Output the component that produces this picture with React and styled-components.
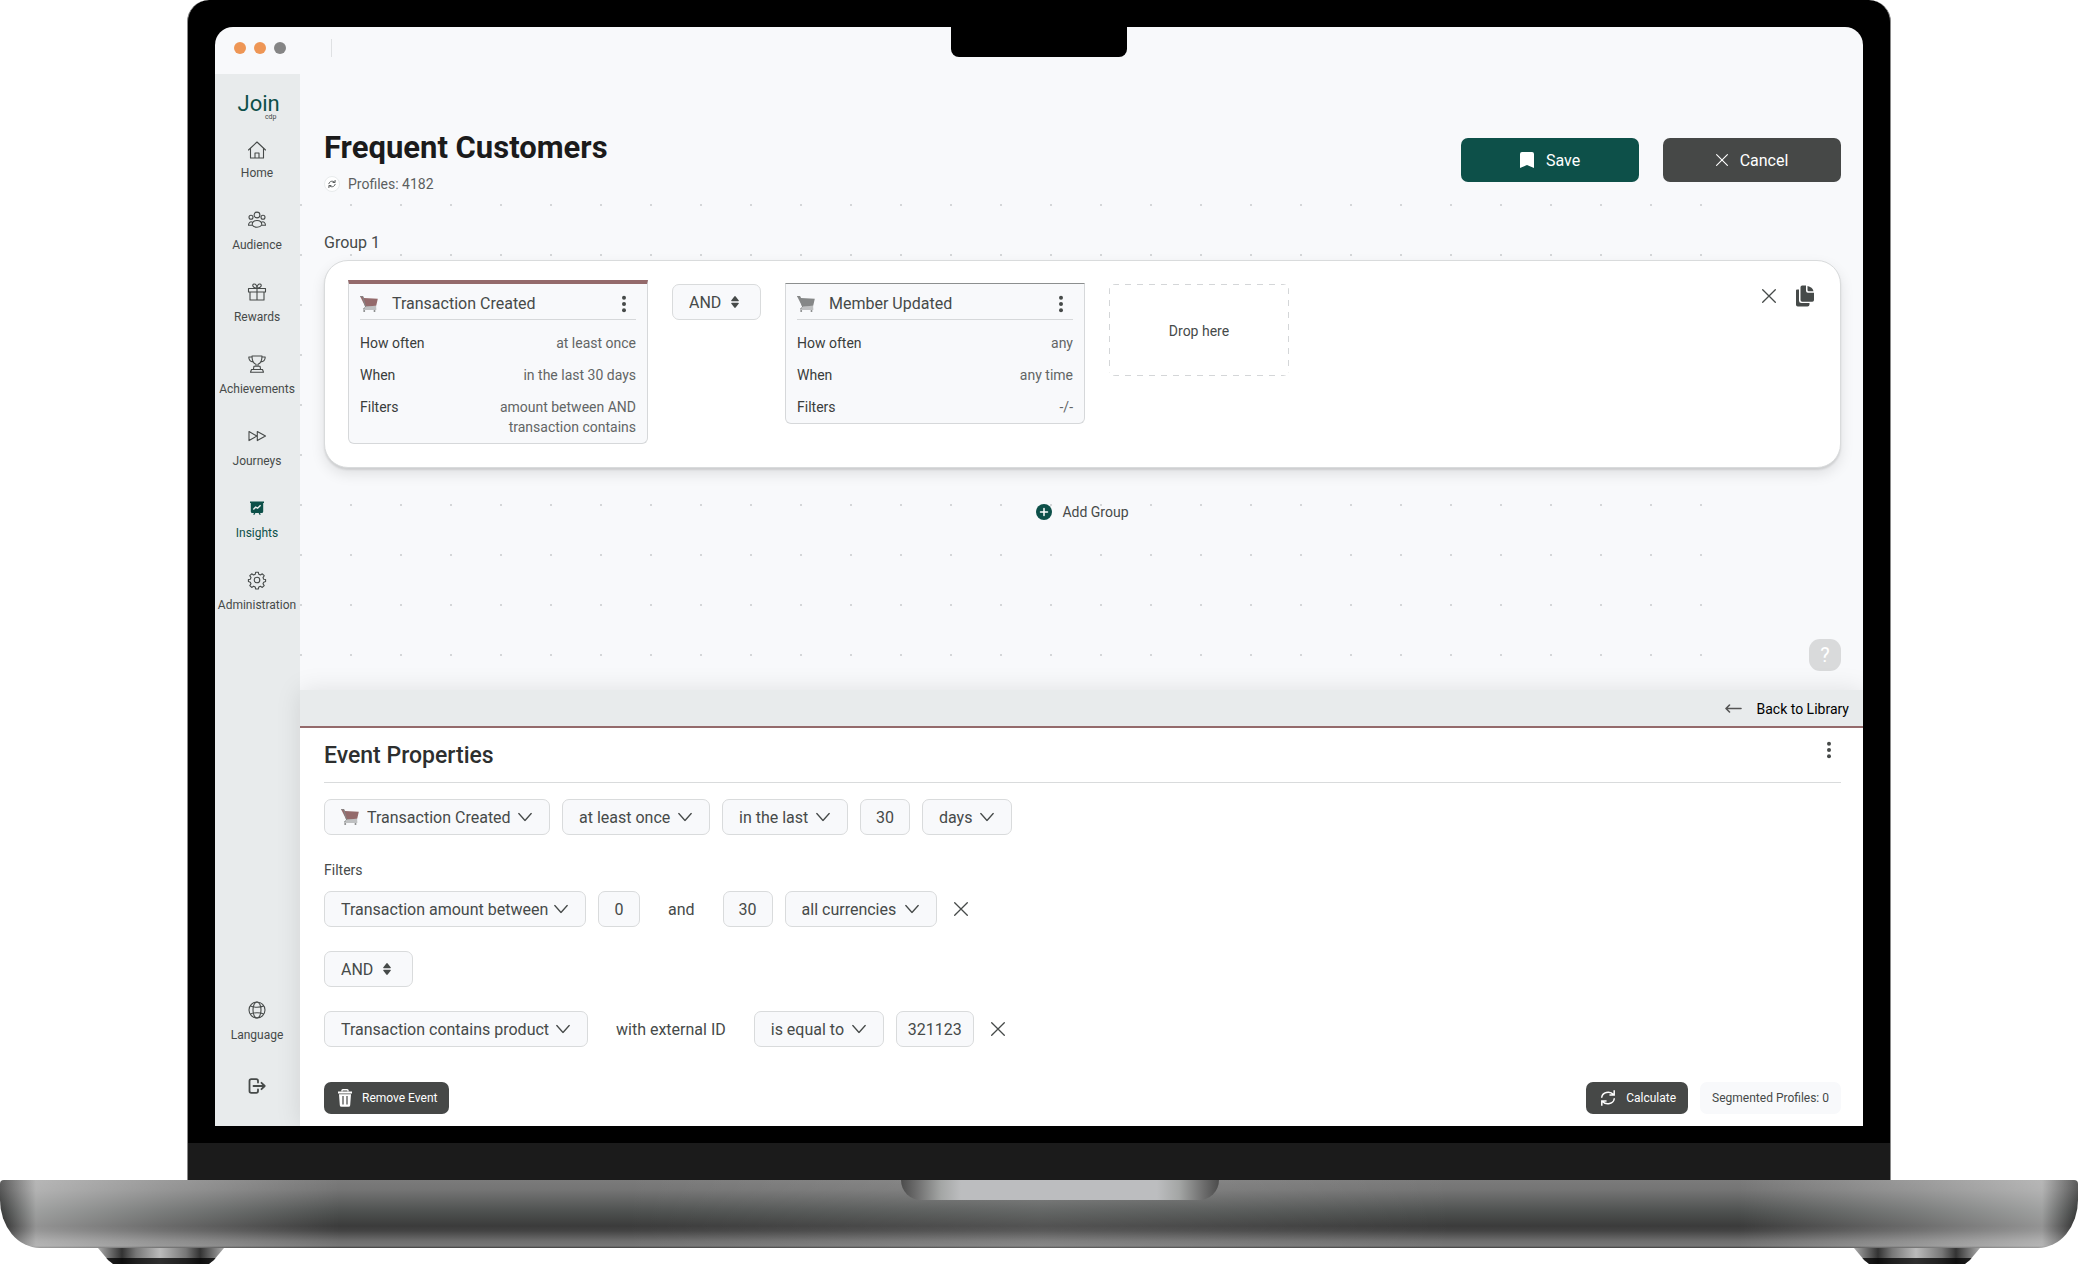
import styled, { createGlobalStyle } from 'styled-components';

const GlobalStyle = createGlobalStyle`
  *, *::before, *::after {
    box-sizing: border-box;
  }

  body {
    margin: 0;
    background: #fff;
    color: #464a49;
    font-family: Roboto, "Liberation Sans", sans-serif;
    font-size: 16px;
  }

  button, input, select {
    font-family: inherit;
    color: inherit;
  }

  h1, h2, h3, p, dl, dd {
    margin: 0;
  }
`;

/* Laptop frame */

const Laptop = styled.div`
  display: flex;
  flex-direction: column;
  min-height: 100vh;
`;

const Lid = styled.div`
  position: relative;
  flex: 1;
  display: flex;
  flex-direction: column;
  margin: 0 187px;
  padding: 27px 27px 0;
  background: #000;
  border: solid #8a8a8a;
  border-width: 0 1px;
  border-radius: 22px 22px 0 0;
`;

const Camera = styled.div`
  position: absolute;
  top: 0;
  left: 50%;
  width: 176px;
  height: 57px;
  margin-left: -88px;
  background: #000;
  border-radius: 0 0 8px 8px;
`;

const Screen = styled.div`
  flex: 1;
  display: flex;
  flex-direction: column;
  overflow: hidden;
  background: #f8f9fb;
  border-radius: 18px 18px 0 0;
`;

const Chin = styled.div`
  height: 54px;
  margin: 0 -27px;
  background: #1b1b1b;
  border-top: 17px solid #000;
`;

const Base = styled.div`
  display: flex;
  justify-content: center;
  height: 68px;
  padding-left: 42px;
  border-radius: 4px 4px 40px 40px / 4px 4px 48px 48px;
  background:
    linear-gradient(
      90deg,
      rgba(0, 0, 0, 0.25),
      rgba(255, 255, 255, 0.45) 36px,
      rgba(255, 255, 255, 0.25) 160px,
      rgba(255, 255, 255, 0) 340px,
      rgba(255, 255, 255, 0) 30%,
      rgba(255, 255, 255, 0.12) 50%,
      rgba(255, 255, 255, 0) 70%,
      rgba(255, 255, 255, 0) calc(100% - 340px),
      rgba(255, 255, 255, 0.25) calc(100% - 160px),
      rgba(255, 255, 255, 0.45) calc(100% - 36px),
      rgba(0, 0, 0, 0.25)
    ),
    linear-gradient(#7b7b7b, #747474 10px, #4d504f 32px, #3b3b3b 46px, #444 51px, #6e6e6e 61px, #777 66px, #3c3c3c 68px);
`;

const Lip = styled.div`
  width: 318px;
  height: 20px;
  border-radius: 0 0 20px 20px;
  background: linear-gradient(90deg, #4c4c4c, #6e6e6e 16px, #a4a6a5 40px, #bcbdbf 60px, #bcbdbf 256px, #a4a6a5 278px, #6e6e6e 302px, #4c4c4c);
`;

const Feet = styled.div`
  display: flex;
  justify-content: space-between;
  padding: 0 98px;
`;

const Foot = styled.div`
  width: 126px;
  height: 16px;
  clip-path: polygon(0 0, 100% 0, 92% 75%, 88% 100%, 12% 100%, 8% 75%);
  background:
    linear-gradient(transparent 10px, rgba(0, 0, 0, 0.75) 10px),
    linear-gradient(90deg, #aaa, #333 24px, #777 38px, #bbb 62px, #777 88px, #333 102px, #aaa);
`;

/* Window */

const TitleBar = styled.div`
  display: flex;
  align-items: center;
  gap: 8px;
  height: 47px;
  padding: 0 19px 5px;
`;

const WindowDot = styled.span`
  width: 12px;
  height: 12px;
  border-radius: 50%;
  background: ${props => props.$color};
`;

const TitleDivider = styled.span`
  width: 1px;
  height: 18px;
  margin-left: 37px;
  background: #dfe1e3;
`;

const Workspace = styled.div`
  flex: 1;
  display: flex;
`;

/* Sidebar */

const Sidebar = styled.aside`
  display: flex;
  flex-direction: column;
  justify-content: space-between;
  flex: 0 0 85px;
  padding: 16px 1px 28px 0;
  background: #e8ebec;
`;

const Logo = styled.a`
  display: block;
  width: 39px;
  margin: 0 auto 14px;
  color: #0d5049;
  font-size: 22px;
  line-height: 28px;
  text-decoration: none;

  small {
    display: block;
    margin-top: -6px;
    color: #464a49;
    font-size: 7px;
    line-height: 10px;
    text-align: right;
  }
`;

const NavList = styled.nav`
  display: flex;
  flex-direction: column;
  align-items: center;
  gap: ${props => props.$gap}px;
`;

const NavItem = styled.a`
  display: flex;
  flex-direction: column;
  align-items: center;
  gap: 5px;
  color: ${props => (props.$active ? '#0d5049' : '#464a49')};
  font-size: 12px;
  line-height: 16px;
  text-decoration: none;
`;

/* Segment canvas */

const Main = styled.main`
  position: relative;
  flex: 1;
  min-width: 0;
  display: flex;
  flex-direction: column;
`;

const PageHeader = styled.header`
  display: flex;
  align-items: center;
  justify-content: space-between;
  padding: 54px 22px 12px 24px;
`;

const PageTitle = styled.h1`
  margin-bottom: 8px;
  color: #1b1b1b;
  font-size: 31px;
  font-weight: 700;
  line-height: 40px;
`;

const ProfileCount = styled.p`
  display: flex;
  align-items: center;
  gap: 8px;
  color: #5c5f5f;
  font-size: 14px;
  line-height: 16px;
`;

const RefreshButton = styled.button`
  display: flex;
  align-items: center;
  justify-content: center;
  width: 16px;
  height: 16px;
  padding: 0;
  background: #fff;
  border: 1px solid #e8ebec;
  border-radius: 50%;
`;

const Actions = styled.div`
  display: flex;
  gap: ${props => props.$gap}px;
`;

const LargeButton = styled.button`
  display: flex;
  align-items: center;
  justify-content: center;
  gap: 12px;
  width: 178px;
  height: 44px;
  background: ${props => (props.$primary ? '#0d5049' : '#464847')};
  border: none;
  border-radius: 7px;
  color: #fff;
  font-size: 16px;
  cursor: pointer;
`;

const Canvas = styled.section`
  position: relative;
  flex: 1;
  display: flex;
  flex-direction: column;
  padding: 29px 22px 19px 24px;

  &::before {
    content: "";
    position: absolute;
    inset: 0 161px 0 0;
    background: conic-gradient(from 270deg at 2px 2px, #d4d6d8 90deg, transparent 0) 0 0 / 50px 50px;
  }

  > * {
    position: relative;
  }
`;

const GroupLabel = styled.h3`
  margin-bottom: 7px;
  font-size: 16px;
  font-weight: 400;
  line-height: 20px;
`;

const GroupCard = styled.div`
  display: flex;
  align-items: flex-start;
  gap: 24px;
  padding: 23px;
  background: #fff;
  border: 1px solid #d9dbdc;
  border-radius: 24px;
  box-shadow: 0 2px 2px rgba(0, 0, 0, 0.1), 0 6px 14px rgba(0, 0, 0, 0.1);
`;

const EventCard = styled.article`
  width: 300px;
  margin-top: ${props => (props.$selected ? -4 : -1)}px;
  padding: 0 11px 6px;
  background: #f8f9fb;
  border: 1px solid #d6d8da;
  border-top: ${props => (props.$selected ? '4px solid #946a6b' : '1px solid #8c8f8f')};
  border-radius: 0 0 6px 6px;
`;

const EventCardHeader = styled.header`
  display: flex;
  align-items: center;
  height: 36px;
  margin-bottom: 13px;
  padding-top: 5px;
  border-bottom: 1px solid #d6d8da;

  h3 {
    flex: 1;
    margin-left: 14px;
    font-size: 16px;
    font-weight: 400;
    line-height: 20px;
  }
`;

const IconButton = styled.button`
  display: flex;
  align-items: center;
  justify-content: center;
  width: 24px;
  height: 24px;
  padding: 0;
  background: none;
  border: none;
  cursor: pointer;
`;

const Conditions = styled.dl`
  display: flex;
  flex-direction: column;
  gap: 12px;
  font-size: 14px;
  line-height: 20px;
`;

const Condition = styled.div`
  display: flex;
  justify-content: space-between;

  dt {
    color: #3a3d3c;
  }

  dd {
    color: #626565;
    text-align: right;
    white-space: pre-line;
  }
`;

const DropZone = styled.div`
  display: flex;
  align-items: center;
  justify-content: center;
  width: 180px;
  height: 92px;
  padding-top: 2px;
  border-radius: 6px;
  background:
    repeating-linear-gradient(90deg, #d4d6d8 0 6px, transparent 6px 12px) 4px 0 / 100% 1px no-repeat,
    repeating-linear-gradient(90deg, #d4d6d8 0 6px, transparent 6px 12px) 4px 100% / 100% 1px no-repeat,
    repeating-linear-gradient(#d4d6d8 0 6px, transparent 6px 12px) 0 4px / 1px 100% no-repeat,
    repeating-linear-gradient(#d4d6d8 0 6px, transparent 6px 12px) 100% 4px / 1px 100% no-repeat;
  font-size: 14px;
`;

const GroupActions = styled.div`
  display: flex;
  gap: 12px;
  margin-left: auto;
`;

const AddGroupButton = styled.button`
  display: flex;
  align-items: center;
  align-self: center;
  gap: 10px;
  margin-top: 34px;
  padding: 0;
  background: none;
  border: none;
  font-size: 14px;
  line-height: 20px;
  cursor: pointer;
`;

const HelpButton = styled.button`
  align-self: flex-end;
  width: 32px;
  height: 32px;
  margin-top: auto;
  padding: 0;
  background: #d9dadb;
  border: none;
  border-radius: 11px;
  color: #fff;
  font-size: 20px;
  cursor: pointer;
`;

/* Event panel */

const Panel = styled.section`
  position: relative;
  background: #fff;
  box-shadow: 0 0 24px rgba(0, 0, 0, 0.1);
`;

const PanelBar = styled.div`
  display: flex;
  justify-content: flex-end;
  height: 38px;
  padding: 1px 14px 0;
  background: #e8ebec;
  border-bottom: 2px solid #946a6b;
`;

const BackLink = styled.a`
  display: flex;
  align-items: center;
  gap: 14px;
  color: #000;
  font-size: 14px;
  text-decoration: none;
`;

const PanelBody = styled.div`
  padding: 12px 22px 12px 24px;
`;

const PanelHeader = styled.header`
  display: flex;
  justify-content: space-between;
  margin-bottom: 16px;
  padding-bottom: 10px;
  border-bottom: 1px solid #d9dbdc;

  h2 {
    color: #2d2f2f;
    font-size: 23px;
    font-weight: 500;
    line-height: 32px;
  }

  button {
    height: 20px;
  }
`;

const FilterTitle = styled.h3`
  margin: 26px 0 12px;
  font-size: 14px;
  font-weight: 400;
  line-height: 18px;
`;

const FieldRow = styled.div`
  display: flex;
  align-items: center;
  gap: 12px;
`;

const FilterList = styled.div`
  display: flex;
  flex-direction: column;
  gap: 24px;
`;

const SelectBox = styled.label`
  position: relative;
  display: flex;
  width: ${props => props.$width}px;

  > svg {
    position: absolute;
    top: 50%;
    right: 18px;
    transform: translateY(-50%);
    pointer-events: none;
  }

  > svg:first-child {
    right: auto;
    left: 17px;
  }
`;

const Select = styled.select`
  width: 100%;
  height: 36px;
  padding: 0 0 0 ${props => (props.$withIcon ? 42 : 16)}px;
  appearance: none;
  background: #f8f9fb;
  border: 1px solid #d9dbdc;
  border-radius: 7px;
  font-size: 16px;
`;

const ValueInput = styled.input`
  width: ${props => props.$width}px;
  height: 36px;
  padding: 0;
  background: #f8f9fb;
  border: 1px solid #d9dbdc;
  border-radius: 7px;
  font-size: 16px;
  text-align: center;
`;

const JoinText = styled.span`
  padding: 0 16px;
  font-size: 16px;
`;

const PanelFooter = styled.footer`
  display: flex;
  justify-content: space-between;
  margin-top: 35px;
`;

const SmallButton = styled.button`
  display: flex;
  align-items: center;
  gap: 10px;
  height: 32px;
  padding: 0 12px 0 14px;
  background: #464847;
  border: none;
  border-radius: 7px;
  color: #fff;
  font-size: 12px;
  cursor: pointer;
`;

const Badge = styled.span`
  display: flex;
  align-items: center;
  height: 32px;
  padding: 0 12px;
  background: #f8f9fb;
  border-radius: 7px;
  font-size: 12px;
`;

/* Icons */

const LineIcon = ({ size = 24, width = 1.1, children }) => (
  <svg width={size} height={size} viewBox="0 0 24 24" fill="none" stroke="currentColor" strokeWidth={width} strokeLinecap="round" strokeLinejoin="round" aria-hidden="true">
    {children}
  </svg>
);

const HomeIcon = () => (
  <LineIcon>
    <path d="M3.500 14 12 6l8.500 8M5.500 12.500V22h13v-9.500M10 22v-5h4v5" />
  </LineIcon>
);

const AudienceIcon = () => (
  <LineIcon>
    <circle cx="12" cy="7" r="2.900" />
    <circle cx="6" cy="9.300" r="2" />
    <circle cx="18" cy="9.300" r="2" />
    <path d="M7.200 17c0-2.800 2-4.500 4.800-4.500s4.800 1.700 4.800 4.500c-2 3-7.600 3-9.600 0ZM7.500 14.200c-2-1.200-4 .5-4 3.100h3.600M16.500 14.200c2-1.200 4 .5 4 3.100h-3.600" />
  </LineIcon>
);

const GiftIcon = () => (
  <LineIcon>
    <path d="M3.500 8.500h17V12h-17zM5 12h14v8H5zM12 8.500V20M12 8C7.500 8.500 6.800 4.200 9 4c2-.2 3 2 3 4ZM12 8c4.500.5 5.200-3.800 3-4-2-.2-3 2-3 4Z" />
  </LineIcon>
);

const TrophyIcon = () => (
  <LineIcon>
    <path d="M7 4h10c0 5-1.500 7.500-4 8.300v1.900h-2v-1.900C8.500 11.500 7 9 7 4ZM7 5H3.800c0 3.300 1.700 5 4.400 5M17 5h3.200c0 3.300-1.700 5-4.400 5M9 14.200h6l.6 3.300H8.400zM6.500 17.500h11l1 2.700h-13z" />
  </LineIcon>
);

const JourneysIcon = () => (
  <LineIcon>
    <path d="M4 7.600v9l7.800-4.500zM12.300 7.600v9l8.200-4.500z" />
  </LineIcon>
);

const InsightsIcon = () => (
  <svg width="24" height="24" viewBox="0 0 24 24" fill="currentColor" aria-hidden="true">
    <path d="M5 5.500h14V7h-.8v8.500q0 1.500-1.500 1.500H15l.8 1.600-1.100.4-1.100-2h-3.200l-1.100 2-1.100-.4L9 17H7.300q-1.500 0-1.500-1.500V7H5z" />
    <path d="m8.300 13.500 2.300-2.300 2 1 3-3" fill="none" stroke="#e8ebec" strokeWidth="1.500" />
  </svg>
);

const GearIcon = () => (
  <LineIcon>
    <circle cx="12" cy="12" r="2.800" />
    <path d="M10.700 4.200h2.600l.5 2.100 1.600.7 1.900-1.200 1.900 1.900L18 9.600l.7 1.600 1.900.3v2l-1.900.7-.7 1.500 1.200 1.900-1.900 1.800-1.900-1.100-1.600.7-.5 2h-2.600l-.5-2-1.600-.7-1.900 1.100-1.900-1.800L6 15.700l-.7-1.500-1.900-.7v-2l1.900-.3L6 9.600 4.800 7.700l1.900-1.900L8.600 7l1.600-.7z" />
  </LineIcon>
);

const GlobeIcon = () => (
  <LineIcon>
    <circle cx="12" cy="12" r="8" />
    <ellipse cx="12" cy="12" rx="4" ry="8" />
    <path d="M5.500 8c3 1.600 10 1.600 13 0M5.500 16c3-1.600 10-1.600 13 0" />
  </LineIcon>
);

const LogoutIcon = () => (
  <LineIcon width={1.8}>
    <path d="M13 8.500V7q0-1.800-1.800-1.800H6.300Q4.500 5.200 4.500 7v10q0 1.800 1.800 1.800h4.900Q13 18.800 13 17v-1.500M8.500 12h11M16.500 8.800l3.200 3.200-3.200 3.200" />
  </LineIcon>
);

const CartIcon = ({ color }) => (
  <svg width="18" height="16" viewBox="0 0 18 16" aria-hidden="true">
    <path d="M0 0h3l.8 2 14 .8-1.600 7-11 .7z" fill={color} />
    <path d="M.3.600h2.500l2.800 10.400h10.600M5.600 11l-2.300 2h13" fill="none" stroke="#858787" strokeWidth="1" />
    <circle cx="4.200" cy="15" r="1" fill="#858787" />
    <circle cx="14.500" cy="15" r="1" fill="#858787" />
  </svg>
);

const KebabIcon = () => (
  <svg width="4" height="18" viewBox="0 0 4 18" fill="#464a49" aria-hidden="true">
    <circle cx="2" cy="2.700" r="2" />
    <circle cx="2" cy="9" r="2" />
    <circle cx="2" cy="15.300" r="2" />
  </svg>
);

const CrossIcon = ({ size = 14 }) => (
  <svg width={size} height={size} viewBox="0 0 14 14" stroke="currentColor" strokeWidth="1.300" strokeLinecap="round" aria-hidden="true">
    <path d="m.7.7 12.600 12.600M13.300.7.7 13.300" />
  </svg>
);

const CopyIcon = () => (
  <svg width="18" height="22" viewBox="0 0 18 22" fill="currentColor" aria-hidden="true">
    <path d="M6.200.5H10V5.700q0 2 2 2h6V15q0 1.700-1.700 1.700H6.200Q4.500 16.700 4.500 15V2.200Q4.500.5 6.200.5Z" />
    <path d="M11.500 1c3 .5 5.500 2.500 6 5.200h-4.800q-1.200 0-1.200-1.200z" />
    <path d="M0 5.500q0-1 1-1h2v11.200q0 2.400 2.400 2.400h8.100v1.400q0 2-2 2H1.800Q0 21.500 0 19.700z" />
  </svg>
);

const BookmarkIcon = () => (
  <svg width="14" height="16" viewBox="0 0 14 16" fill="currentColor" aria-hidden="true">
    <path d="M2 0h10q2 0 2 2v14l-7-3-7 3V2q0-2 2-2Z" />
  </svg>
);

const ChevronIcon = () => (
  <svg width="14" height="9" viewBox="0 0 14 9" fill="none" stroke="currentColor" strokeWidth="1.300" strokeLinecap="round" strokeLinejoin="round" aria-hidden="true">
    <path d="m.8 1 6.200 7 6.200-7" />
  </svg>
);

const SortIcon = () => (
  <svg width="16" height="12" viewBox="-3 0 16 12" fill="currentColor" aria-hidden="true">
    <path d="M1.700 5.200Q1 5.200 1.200 4.500L4.300.5q.7-.8 1.400 0l3.100 4q.3.700-.5.700zM1.700 6.800q-.7 0-.5.700l3.100 4q.7.800 1.400 0l3.100-4q.3-.7-.5-.7z" />
  </svg>
);

const RefreshIcon = ({ size = 16, width = 1.5 }) => (
  <svg width={size} height={size} viewBox="0 0 16 16" fill="none" stroke="currentColor" strokeWidth={width} strokeLinecap="square" aria-hidden="true">
    <path d="M1.800 7C2.500 2.500 9.500.2 13.500 4.500M14.200 1v4h-4M14.200 9c-.7 4.500-7.700 6.800-11.700 2.500M1.800 15v-4h4" />
  </svg>
);

const PlusIcon = () => (
  <svg width="16" height="16" viewBox="0 0 16 16" aria-hidden="true">
    <circle cx="8" cy="8" r="8" fill="#0d5049" />
    <path d="M8 4.500v7M4.500 8h7" stroke="#fff" strokeWidth="1.500" strokeLinecap="round" />
  </svg>
);

const ArrowIcon = () => (
  <svg width="17" height="9" viewBox="0 0 17 9" fill="none" stroke="#555" strokeWidth="1.600" strokeLinecap="round" strokeLinejoin="round" aria-hidden="true">
    <path d="M16 4.500H1.200M4.500 1 1 4.500 4.500 8" />
  </svg>
);

const TrashIcon = () => (
  <svg width="14" height="18" viewBox="0 0 14 18" aria-hidden="true">
    <path d="M4 2.500V1.600Q4 .8 4.800.8h4.400q.8 0 .8.800v.9" fill="none" stroke="#fff" strokeWidth="1.400" />
    <path d="M0 2.500h14v2H0zM1 5.200h12l-.8 11q-.1 1.600-1.700 1.600h-7q-1.600 0-1.700-1.600z" fill="#fff" />
    <path d="M5 7v8.500M9 7v8.500" stroke="#464847" strokeWidth="1.200" />
  </svg>
);

const navigation = [
  { label: 'Home', icon: HomeIcon },
  { label: 'Audience', icon: AudienceIcon },
  { label: 'Rewards', icon: GiftIcon },
  { label: 'Achievements', icon: TrophyIcon },
  { label: 'Journeys', icon: JourneysIcon },
  { label: 'Insights', icon: InsightsIcon, active: true },
  { label: 'Administration', icon: GearIcon }
];

const transactionEvent = {
  title: 'Transaction Created',
  color: '#946a6b',
  selected: true,
  conditions: [
    ['How often', 'at least once'],
    ['When', 'in the last 30 days'],
    ['Filters', 'amount between AND\ntransaction contains']
  ]
};

const memberEvent = {
  title: 'Member Updated',
  color: '#858787',
  conditions: [
    ['How often', 'any'],
    ['When', 'any time'],
    ['Filters', '-/-']
  ]
};

function Event({ event }) {
  return (
    <EventCard $selected={event.selected}>
      <EventCardHeader>
        <CartIcon color={event.color} />
        <h3>{event.title}</h3>
        <IconButton aria-label={`${event.title} menu`}>
          <KebabIcon />
        </IconButton>
      </EventCardHeader>
      <Conditions>
        {event.conditions.map(([name, value]) => (
          <Condition key={name}>
            <dt>{name}</dt>
            <dd>{value}</dd>
          </Condition>
        ))}
      </Conditions>
    </EventCard>
  );
}

function Dropdown({ label, value, width, icon }) {
  return (
    <SelectBox $width={width}>
      {icon}
      <Select aria-label={label} defaultValue={value} $withIcon={Boolean(icon)}>
        <option>{value}</option>
      </Select>
      <ChevronIcon />
    </SelectBox>
  );
}

function OperatorSelect() {
  return (
    <SelectBox $width={89}>
      <Select aria-label="Operator" defaultValue="AND">
        <option>AND</option>
        <option>OR</option>
      </Select>
      <SortIcon />
    </SelectBox>
  );
}

function SideNavigation() {
  return (
    <Sidebar>
      <div>
        <Logo href="#">
          Join
          <small>cdp</small>
        </Logo>
        <NavList $gap={27}>
          {navigation.map(({ label, icon: Icon, active }) => (
            <NavItem key={label} href="#" $active={active}>
              <Icon />
              {label}
            </NavItem>
          ))}
        </NavList>
      </div>
      <NavList $gap={31}>
        <NavItem href="#">
          <GlobeIcon />
          Language
        </NavItem>
        <NavItem href="#" aria-label="Log out">
          <LogoutIcon />
        </NavItem>
      </NavList>
    </Sidebar>
  );
}

function EventPanel() {
  return (
    <Panel>
      <PanelBar>
        <BackLink href="#">
          <ArrowIcon />
          Back to Library
        </BackLink>
      </PanelBar>
      <PanelBody>
        <PanelHeader>
          <h2>Event Properties</h2>
          <IconButton aria-label="Event menu">
            <KebabIcon />
          </IconButton>
        </PanelHeader>

        <FieldRow>
          <Dropdown label="Event" value="Transaction Created" width={226} icon={<CartIcon color="#946a6b" />} />
          <Dropdown label="Frequency" value="at least once" width={148} />
          <Dropdown label="Period" value="in the last" width={126} />
          <ValueInput aria-label="Period length" defaultValue="30" $width={50} />
          <Dropdown label="Period unit" value="days" width={90} />
        </FieldRow>

        <FilterTitle>Filters</FilterTitle>
        <FilterList>
          <FieldRow>
            <Dropdown label="Filter" value="Transaction amount between" width={262} />
            <ValueInput aria-label="Minimum amount" defaultValue="0" $width={42} />
            <JoinText>and</JoinText>
            <ValueInput aria-label="Maximum amount" defaultValue="30" $width={50} />
            <Dropdown label="Currency" value="all currencies" width={152} />
            <IconButton aria-label="Remove amount filter">
              <CrossIcon />
            </IconButton>
          </FieldRow>
          <OperatorSelect />
          <FieldRow>
            <Dropdown label="Filter" value="Transaction contains product" width={264} />
            <JoinText>with external ID</JoinText>
            <Dropdown label="Comparison" value="is equal to" width={130} />
            <ValueInput aria-label="External ID" defaultValue="321123" $width={78} />
            <IconButton aria-label="Remove product filter">
              <CrossIcon />
            </IconButton>
          </FieldRow>
        </FilterList>

        <PanelFooter>
          <SmallButton>
            <TrashIcon />
            Remove Event
          </SmallButton>
          <Actions $gap={12}>
            <SmallButton>
              <RefreshIcon />
              Calculate
            </SmallButton>
            <Badge>Segmented Profiles: 0</Badge>
          </Actions>
        </PanelFooter>
      </PanelBody>
    </Panel>
  );
}

function App() {
  return (
    <Laptop>
      <GlobalStyle />
      <Lid>
        <Screen>
          <TitleBar>
            <WindowDot $color="#ee9655" />
            <WindowDot $color="#ee9655" />
            <WindowDot $color="#858585" />
            <TitleDivider />
          </TitleBar>
          <Workspace>
            <SideNavigation />
            <Main>
              <PageHeader>
                <div>
                  <PageTitle>Frequent Customers</PageTitle>
                  <ProfileCount>
                    <RefreshButton aria-label="Refresh profiles">
                      <RefreshIcon size={8} width={2} />
                    </RefreshButton>
                    Profiles: 4182
                  </ProfileCount>
                </div>
                <Actions $gap={24}>
                  <LargeButton $primary>
                    <BookmarkIcon />
                    Save
                  </LargeButton>
                  <LargeButton>
                    <CrossIcon size={12} />
                    Cancel
                  </LargeButton>
                </Actions>
              </PageHeader>

              <Canvas>
                <GroupLabel>Group 1</GroupLabel>
                <GroupCard>
                  <Event event={transactionEvent} />
                  <OperatorSelect />
                  <Event event={memberEvent} />
                  <DropZone>Drop here</DropZone>
                  <GroupActions>
                    <IconButton aria-label="Remove group">
                      <CrossIcon />
                    </IconButton>
                    <IconButton aria-label="Duplicate group">
                      <CopyIcon />
                    </IconButton>
                  </GroupActions>
                </GroupCard>
                <AddGroupButton>
                  <PlusIcon />
                  Add Group
                </AddGroupButton>
                <HelpButton aria-label="Help">?</HelpButton>
              </Canvas>

              <EventPanel />
            </Main>
          </Workspace>
        </Screen>
        <Chin />
        <Camera />
      </Lid>
      <Base>
        <Lip />
      </Base>
      <Feet>
        <Foot />
        <Foot />
      </Feet>
    </Laptop>
  );
}

export default App;
